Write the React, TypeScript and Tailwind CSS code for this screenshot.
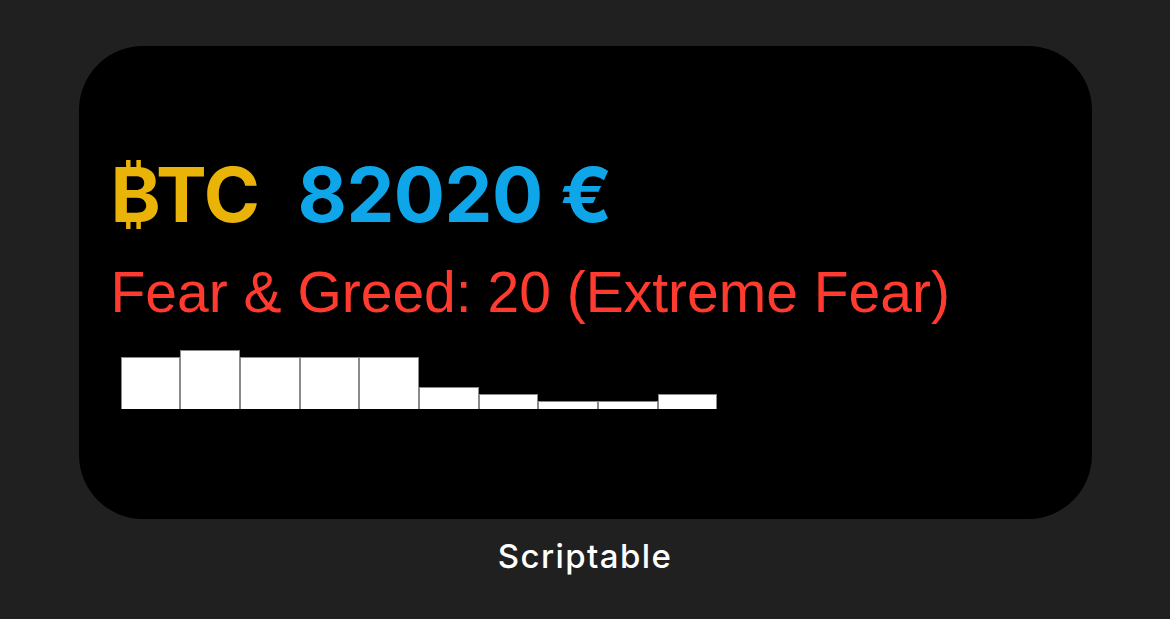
const history = [52, 59, 52, 52, 52, 22, 15, 8, 8, 15];

function Bars({ values }: { values: number[] }) {
  return (
    <div className="flex items-end h-[59px] ml-[10px]">
      {values.map((v, i) => (
        <div
          key={i}
          className="w-[59.7px] bg-white border border-[#8a8a8a] border-b-0"
          style={{ height: v }}
        />
      ))}
    </div>
  );
}

function Widget() {
  return (
    <div className="w-[1013px] h-[473px] rounded-[64px] bg-black pt-[110px] px-[32px]">
      <div className="flex items-baseline gap-[38px] font-['Inter',sans-serif] font-bold text-[76px] leading-[76px] tracking-[-0.5px]">
        <span className="text-[#eab308]">₿TC</span>
        <span className="text-[#0ea5e9]">82020 €</span>
      </div>
      <p className="mt-[32px] font-['Liberation_Sans',sans-serif] text-[57px] leading-[57px] text-[#ff3b30]">
        Fear &amp; Greed: 20 (Extreme Fear)
      </p>
      <div className="mt-[29px]">
        <Bars values={history} />
      </div>
    </div>
  );
}

export default function App() {
  return (
    <div className="w-[1170px] h-[619px] bg-[#202020] flex flex-col items-center pt-[46px]">
      <Widget />
      <p className="mt-[17px] font-['Inter',sans-serif] font-medium text-[33px] leading-[40px] tracking-[1.4px] text-white">
        Scriptable
      </p>
    </div>
  );
}
